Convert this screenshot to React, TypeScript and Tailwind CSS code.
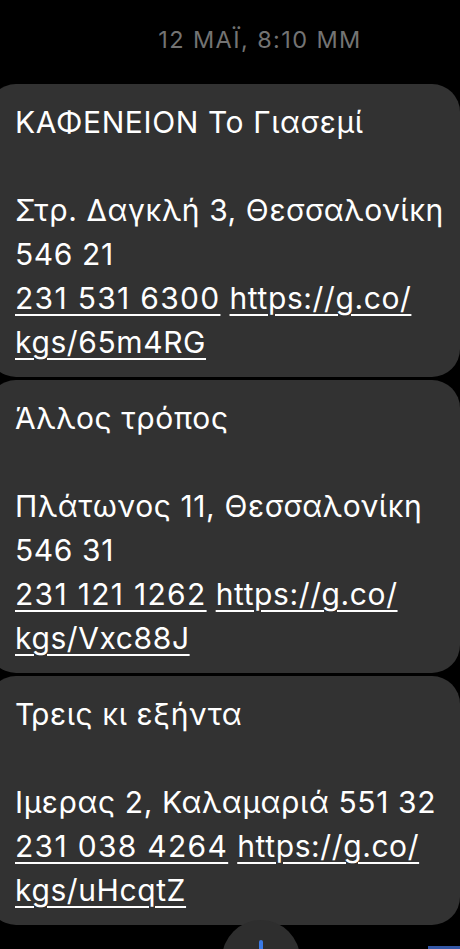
const messages = [
  {
    title: "ΚΑΦΕΝΕΙΟΝ Το Γιασεμί",
    address: ["Στρ. Δαγκλή 3, Θεσσαλονίκη", "546 21"],
    phone: "231 531 6300",
    link: ["https://g.co/", "kgs/65m4RG"],
  },
  {
    title: "Άλλος τρόπος",
    address: ["Πλάτωνος 11, Θεσσαλονίκη", "546 31"],
    phone: "231 121 1262",
    link: ["https://g.co/", "kgs/Vxc88J"],
  },
  {
    title: "Τρεις κι εξήντα",
    address: ["Ιμερας 2, Καλαμαριά 551 32"],
    phone: "231 038 4264",
    link: ["https://g.co/", "kgs/uHcqtZ"],
  },
];

const linkCls = "underline decoration-2 underline-offset-[5px]";

export default function App() {
  return (
    <div
      className="relative h-[949px] w-[460px] overflow-hidden bg-black text-white"
      style={{ fontFamily: 'Inter, "Noto Sans", sans-serif' }}
    >
      {/* timestamp */}
      <div className="flex h-[84px] items-start justify-center pl-[60px] pt-[26px] text-[23.5px] leading-[28px] tracking-[1.4px] text-[#737373]">
        12 ΜΑΪ, 8:10 ΜΜ
      </div>

      {/* bubbles */}
      <div className="flex flex-col gap-[3px]">
        {messages.map((m) => (
          <div
            key={m.title}
            className="-ml-3 w-[472px] whitespace-nowrap rounded-[28px] bg-[#323232] pb-[13px] pl-[27px] pt-4 text-[30px] leading-[44px] tracking-[0.6px]"
          >
            <div>{m.title}</div>
            <div>&nbsp;</div>
            {m.address.map((a) => (
              <div key={a}>{a}</div>
            ))}
            <div>
              <span className={`${linkCls} tracking-[1.3px]`}>{m.phone}</span>{" "}
              <span className={linkCls}>{m.link[0]}</span>
            </div>
            <div>
              <span className={linkCls}>{m.link[1]}</span>
            </div>
          </div>
        ))}
      </div>

      {/* scroll-down button peeking from the bottom */}
      <div className="absolute left-[222px] top-[920px] flex h-[78px] w-[78px] justify-center rounded-full bg-[#2e2e2e] pt-5">
        <div className="h-[12px] w-[4px] rounded-sm bg-[#3b7ae6]" />
      </div>
      <div className="absolute left-[428px] top-[946px] h-[4px] w-[40px] bg-[#3558a8]" />
    </div>
  );
}
